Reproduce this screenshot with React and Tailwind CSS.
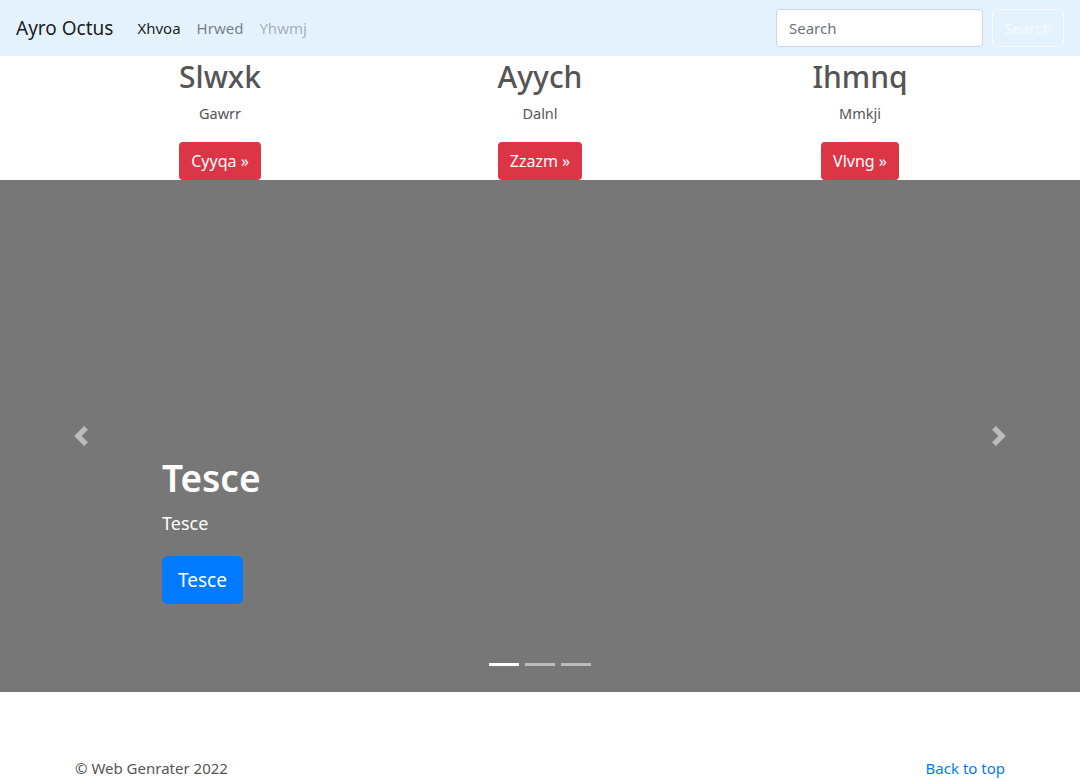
const font = { fontFamily: '"Noto Sans", "Open Sans", sans-serif' }

function Chevron({ dir }) {
  const d =
    dir === 'left'
      ? 'M5.25 0l-4 4 4 4 1.5-1.5L4.25 4l2.5-2.5L5.25 0z'
      : 'M2.75 0l-1.5 1.5L3.75 4l-2.5 2.5L2.75 8l4-4-4-4z'
  return (
    <svg viewBox="0 0 8 8" className="w-5 h-5" fill="#fff">
      <path d={d} />
    </svg>
  )
}

export default function App() {
  const features = [
    { title: 'Slwxk', text: 'Gawrr', btn: 'Cyyqa' },
    { title: 'Ayych', text: 'Dalnl', btn: 'Zzazm' },
    { title: 'Ihmnq', text: 'Mmkji', btn: 'Vlvng' },
  ]

  return (
    <div className="min-h-[780px] bg-white text-[#212529]" style={font}>
      <nav className="h-14 bg-[#e3f2fd] flex items-center pl-4 pr-4">
        <a className="text-[19px] text-black/90 mr-6 leading-none">Ayro Octus</a>
        <div className="flex items-center gap-4 text-[15px]">
          <a className="text-black/90">Xhvoa</a>
          <a className="text-black/50">Hrwed</a>
          <a className="text-black/30">Yhwmj</a>
        </div>
        <div className="ml-auto flex items-center gap-[9px]">
          <div className="w-[207px] h-[38px] bg-white border border-[#ced4da] rounded flex items-center px-3 text-[#6c757d] text-[15px]">
            Search
          </div>
          <button className="w-[72px] h-[38px] border border-[#f8f9fa] rounded text-[#f8f9fa] text-[15px]">
            Search
          </button>
        </div>
      </nav>

      <div className="w-[960px] mx-auto grid grid-cols-3">
        {features.map((f) => (
          <div key={f.title} className="flex flex-col items-center">
            <h2 className="text-[30px] font-medium text-[#555] leading-[1.2] mt-[3px]">{f.title}</h2>
            <p className="text-[14.5px] text-[#555] mt-[8px]">{f.text}</p>
            <button className="mt-[17px] h-[38px] px-3 bg-[#dc3545] text-white text-base rounded">
              {f.btn} »
            </button>
          </div>
        ))}
      </div>

      <div className="relative h-[512px] bg-[#777]">
        <div className="absolute left-0 top-0 bottom-0 w-[162px] flex items-center justify-center opacity-50">
          <Chevron dir="left" />
        </div>
        <div className="absolute right-0 top-0 bottom-0 w-[162px] flex items-center justify-center opacity-50">
          <Chevron dir="right" />
        </div>
        <div className="absolute left-[162px] bottom-[88px] text-white">
          <h1 className="text-[37px] font-semibold leading-[1.2]">Tesce</h1>
          <p className="text-[18px] mt-[9px]">Tesce</p>
          <button className="mt-[19px] h-12 px-[16px] bg-[#007bff] text-white text-[19px] rounded-md">
            Tesce
          </button>
        </div>
        <div className="absolute bottom-[26px] left-0 right-0 flex justify-center gap-1.5">
          <span className="w-[30px] h-[3px] bg-white" />
          <span className="w-[30px] h-[3px] bg-white/50" />
          <span className="w-[30px] h-[3px] bg-white/50" />
        </div>
      </div>

      <footer className="w-[960px] mx-auto px-[15px] pt-[65px] flex justify-between text-[15px]">
        <p className="text-[#555]">© Web Genrater 2022</p>
        <a className="text-[#007bff]">Back to top</a>
      </footer>
    </div>
  )
}
